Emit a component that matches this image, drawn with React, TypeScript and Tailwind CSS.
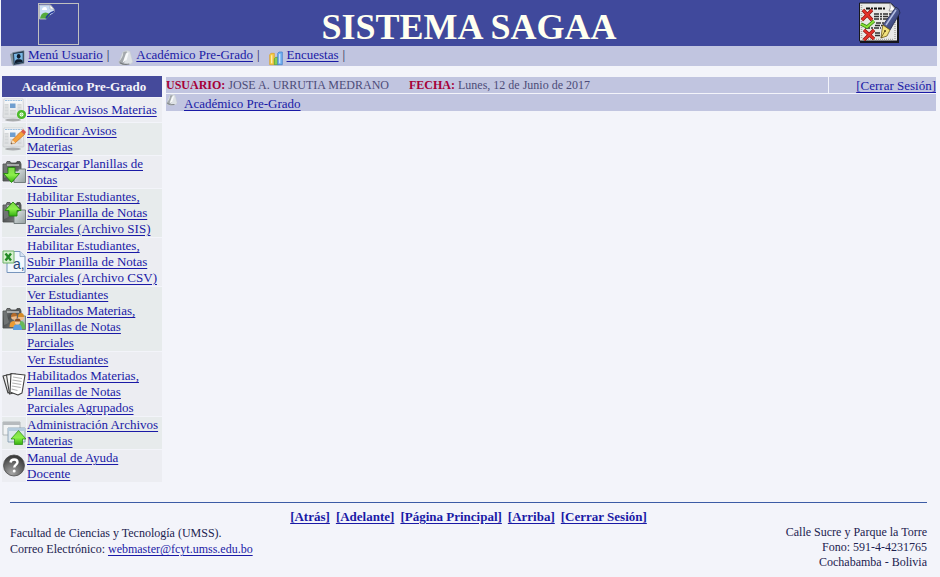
import type { ReactNode } from 'react';

const linkBase = 'text-[#1a1aa6] underline underline-offset-2';
const link = `text-[13px] ${linkBase}`;

function Icon({ children, className = 'size-6' }: { children: ReactNode; className?: string }) {
  return (
    <svg viewBox="0 0 24 24" className={`shrink-0 ${className}`} aria-hidden="true">
      {children}
    </svg>
  );
}

function Gradients() {
  return (
    <svg className="absolute size-0" aria-hidden="true">
      <defs>
        <linearGradient id="green" x1="0" y1="0" x2="0" y2="1">
          <stop offset="0" stopColor="#7fd64a" />
          <stop offset=".5" stopColor="#8cf04a" />
          <stop offset="1" stopColor="#35b010" />
        </linearGradient>
        <linearGradient id="dark" x1="0" y1="0" x2="1" y2="1">
          <stop offset="0" stopColor="#8e9191" />
          <stop offset=".4" stopColor="#4c4f4f" />
          <stop offset="1" stopColor="#8b8e8e" />
        </linearGradient>
        <linearGradient id="folder" x1="0" y1="0" x2="1" y2="1">
          <stop offset="0" stopColor="#e3e8e8" />
          <stop offset="1" stopColor="#94a0a0" />
        </linearGradient>
        <linearGradient id="paper" x1="0" y1="0" x2="0" y2="1">
          <stop offset="0" stopColor="#fafbfc" />
          <stop offset="1" stopColor="#dcdee0" />
        </linearGradient>
        <linearGradient id="pen" x1="0" y1="0" x2="1" y2="1">
          <stop offset="0" stopColor="#8d97c6" />
          <stop offset=".5" stopColor="#4a568f" />
          <stop offset="1" stopColor="#27305c" />
        </linearGradient>
        <radialGradient id="ball" cx=".4" cy=".85" r=".9">
          <stop offset="0" stopColor="#a6a6a6" />
          <stop offset=".5" stopColor="#6a6a6a" />
          <stop offset="1" stopColor="#2c2c2c" />
        </radialGradient>
      </defs>
    </svg>
  );
}

function Newspaper() {
  return (
    <>
      <ellipse cx="11" cy="22" rx="8" ry="1.400" fill="#a9abad" />
      <path d="M2 1h19l1 18q0 1-1 1H2q-1.500 0-1-2z" fill="url(#paper)" stroke="#c6c9cc" strokeWidth=".7" />
      <path d="M3 2.500h17" stroke="#9cbfe0" strokeWidth="1.200" strokeDasharray="2 .6" />
      <path d="M2.500 6h4v11h-4zM15.500 6h4v11h-4zM8 12h6v5H8z" fill="#d3d6d8" />
      <path d="M2.500 8h4M2.500 11h4M2.500 14h4M15.500 8h4M15.500 11h4M15.500 14h4M8 14h6" stroke="#eceeef" strokeWidth=".7" />
      <path d="M8 5.500h5.500V10H8z" fill="#6f9ecf" />
    </>
  );
}

function Binder() {
  return (
    <>
      <path d="M1 4h3l1-2.500h3L9 3h5l1-1.500h3L19 4v15l-2 2H1z" fill="url(#dark)" stroke="#474a4a" strokeWidth=".8" />
      <path d="M5 5h12" stroke="#c9cccc" strokeWidth="1.400" />
      <path d="M2 5v13q3 0 5-3L4 5z" fill="#707474" />
      <path d="M12 11h4l1-2h6.500v13.500H12z" fill="url(#folder)" stroke="#6b7575" strokeWidth=".9" />
    </>
  );
}

const arrowDown = <path d="M6 7.500h7v6h4.500L9.500 22.500 1.500 13.500H6z" fill="url(#green)" stroke="#238a0a" strokeWidth=".9" />;
const arrowUp = <path d="M11 1l8 8.500h-4V15H7V9.500H3z" fill="url(#green)" stroke="#238a0a" strokeWidth=".9" />;

function BellIcon({ className }: { className: string }) {
  return (
    <Icon className={className}>
      <path d="M7 3q6-4 11-1l4 15q0 4-6 5l-7 1q-6 0-8-4z" fill="#dde1e5" stroke="#c3c8ce" strokeWidth=".8" />
      <path d="M8 3q0 8-7 15 1 4 7 3l5-8q1-6 0-11z" fill="#a3a8ac" />
      <path d="M12 5l4-1-3 11-6 4z" fill="#f8fafb" />
      <path d="M3 19q6 4 14 2" fill="none" stroke="#75797d" strokeWidth="1.800" />
    </Icon>
  );
}

function UserIcon() {
  return (
    <Icon className="size-4">
      <path d="M0 6l5-2v17l-2 1z" fill="#8a979d" />
      <path d="M4 4l17-3v19L5 23z" fill="#22374c" stroke="#7d8e9b" />
      <path d="M6 6l13-2v14L7 20z" fill="#7ab8e6" />
      <ellipse cx="13" cy="9.500" rx="2.800" ry="3.500" fill="#101c2d" />
      <path d="M7 20q0-5 4-6h4q4 0 4 4z" fill="#101c2d" />
    </Icon>
  );
}

function ChartIcon() {
  return (
    <Icon className="size-4">
      <path d="M1 7l2-2h5v17H1z" fill="#f4cc43" stroke="#d99a26" />
      <path d="M8 13l2-2h4v11H8z" fill="#86cf52" stroke="#4f9c30" />
      <path d="M13 5l2-2h5v19h-7z" fill="#73b2f2" stroke="#3e78c5" />
      <path d="M4 8v12M16 6v14" stroke="#ffffff" strokeOpacity=".6" strokeWidth="2" />
    </Icon>
  );
}

function BrokenImage() {
  return (
    <svg viewBox="0 0 16 16" className="size-4" aria-hidden="true">
      <path d="M.5 1h11l3.500 4v10H.5z" fill="#c9dcf5" stroke="#b5b8bf" />
      <path d="M3 6q0-3 3-3 2 0 2 3z" fill="#ffffff" />
      <path d="M1 14.500q1-6 5.500-6t6 6z" fill="#55ab3d" />
      <path d="M11 1v4h4z" fill="#ffffff" stroke="#a4a7ad" strokeWidth=".6" />
      <path d="M7 16q3-5 9-8v8z" fill="#40499c" />
      <path d="M7 14.500q2-5 8-7" fill="none" stroke="#26399a" strokeWidth="1.500" />
    </svg>
  );
}

function ExamLogo() {
  return (
    <svg viewBox="0 0 42 42" className="h-[42px] w-[42px]" role="img" aria-label="SAGAA">
      <path d="M1 2h32l7 8v31H1z" fill="#15151c" />
      <path d="M.5 1h31l7 7v31H.5z" fill="#e9e9e6" stroke="#17171d" />
      <path d="M2.500 3v34M36 12v25M3 37.500h32" stroke="#a9a9a4" strokeWidth="1.500" strokeDasharray="1 1" />
      <path d="M7 6.500h20" stroke="#111111" strokeWidth="2" strokeDasharray="4 1 2 1 3 1" />
      <path d="M15 12h17M15 14.500h14M15 17h17M17 21h14M16 23.500h10M16 31h6M6 26h16M16 33.500h5" stroke="#303030" strokeWidth="1.300" strokeDasharray="5 1 2 1" />
      <path d="M31 1q1 6-1 8h8z" fill="#ffffff" stroke="#77777c" strokeWidth=".7" />
      <path d="M4 8l9 10M13 8L3 18M5 28l10 9M15 28L5 38" stroke="#8e120d" strokeWidth="3.400" />
      <path d="M4 8l9 10M13 8L3 18M5 28l10 9M15 28L5 38" stroke="#e4322a" strokeWidth="2.200" />
      <path d="M2 22l6 3 7-6" fill="none" stroke="#31850d" strokeWidth="3.400" />
      <path d="M2 22l6 3 7-6" fill="none" stroke="#8be039" strokeWidth="1.900" />
      <path d="M37 5q4 2 4 6L31 28l-7-5z" fill="url(#pen)" stroke="#20274c" strokeWidth=".8" />
      <path d="M37 8L27 23" stroke="#b7c1e3" strokeWidth="1.400" />
      <path d="M24 23l7 5-3 6-6 2 1-8z" fill="#f2e27b" stroke="#6e5a1c" strokeWidth=".8" />
      <path d="M22 36l4-7" stroke="#5b4711" strokeWidth=".8" />
      <circle cx="26" cy="29" r="1" fill="#4c3a0d" />
    </svg>
  );
}

const menu: { label: string; icon: ReactNode }[] = [
  {
    label: 'Publicar Avisos Materias',
    icon: (
      <>
        <Newspaper />
        <circle cx="19.500" cy="16.500" r="3.300" fill="#ffffff" stroke="#4dbb2c" strokeWidth="2.600" />
        <path d="M19.500 14.700v3.600M17.700 16.500h3.600" stroke="#b4e8a2" strokeWidth="1.200" />
      </>
    ),
  },
  {
    label: 'Modificar Avisos\nMaterias',
    icon: (
      <>
        <Newspaper />
        <path d="M9 17l1.500-4L19 4.500l3.500 3-9.500 8.500z" fill="#f5a13b" stroke="#c56a1c" strokeWidth=".7" />
        <path d="M19 4.500L21 2l3 3-1.500 2.500z" fill="#d9584c" />
        <path d="M9 17l1.500-4 3 3z" fill="#f4dfbf" />
        <path d="M9 17l1.500-.6-.9-1z" fill="#333333" />
      </>
    ),
  },
  { label: 'Descargar Planillas de\nNotas', icon: <><Binder />{arrowDown}</> },
  { label: 'Habilitar Estudiantes,\nSubir Planilla de Notas\nParciales (Archivo SIS)', icon: <><Binder />{arrowUp}</> },
  {
    label: 'Habilitar Estudiantes,\nSubir Planilla de Notas\nParciales (Archivo CSV)',
    icon: (
      <>
        <path d="M5 1.500h13l5 5v16H5z" fill="#f1f7fe" stroke="#7795bd" />
        <path d="M18 1.500v5h5" fill="#d6e3f3" stroke="#7795bd" strokeWidth=".7" />
        <path d="M1 1h11v12H1z" fill="#d6f0cf" stroke="#6fb368" />
        <path d="M3.500 3.500l5.500 7M9 3.500l-5.500 7" stroke="#238a25" strokeWidth="2.400" />
        <text x="11" y="19" fontSize="14" fill="#274878" fontFamily="Liberation Sans, sans-serif">a,</text>
      </>
    ),
  },
  {
    label: 'Ver Estudiantes\nHablitados Materias,\nPlanillas de Notas\nParciales',
    icon: (
      <>
        <Binder />
        <path d="M7.500 20q0-6 4-6t4 6z" fill="#eb9b34" />
        <path d="M15 22q0-8 4-8t4.500 8z" fill="#66b957" />
        <circle cx="12" cy="10" r="2.800" fill="#f1bd8b" />
        <path d="M9 10q0-4 3-4t3 3z" fill="#b56b29" />
        <circle cx="19" cy="10.500" r="2.800" fill="#f1bd8b" />
        <path d="M16 10q0-4 3-4t3 4z" fill="#d58b26" />
        <path d="M11 23q0-6 4.500-6t4.500 6z" fill="#5c9fe0" />
        <circle cx="15.500" cy="15" r="2.600" fill="#f5ca9c" />
        <path d="M12.700 14.500q0-3 3-3t3 3z" fill="#8c4f22" />
      </>
    ),
  },
  {
    label: 'Ver Estudiantes\nHabilitados Materias,\nPlanillas de Notas\nParciales Agrupados',
    icon: (
      <g strokeLinejoin="round">
        <path d="M1 4l8-2 3 16-6 3z" fill="#eeeeee" stroke="#404040" strokeWidth="1.100" />
        <path d="M4.500 3l9-1 1 18-7 2z" fill="#f8f8f8" stroke="#404040" strokeWidth="1.100" />
        <path d="M9 1.500L23 3l-3 18-4 2-8-3z" fill="#ffffff" stroke="#404040" strokeWidth="1.100" />
        <path d="M11 5l9 1.500M10.500 8l9 1.500M10.200 11l9 1.500M9.800 14l9 1.500M9.500 17l6 1.500" stroke="#b4b4b4" strokeWidth="1.200" />
      </g>
    ),
  },
  {
    label: 'Administración Archivos\nMaterias',
    icon: (
      <>
        <path d="M1 1h17v13H1z" fill="#f1f3f4" stroke="#a5a9ad" strokeWidth=".8" />
        <path d="M1 1h17v3H1z" fill="#b6babd" />
        <path d="M6 7h17v14H6z" fill="#dce7ee" stroke="#7f98ac" strokeWidth=".8" />
        <path d="M6 7h17v3H6z" fill="#b5cbdc" />
        <path d="M16.500 9.500L24 18h-3.500v5.500h-8V18H9z" fill="url(#green)" stroke="#238a0a" strokeWidth=".7" />
      </>
    ),
  },
  {
    label: 'Manual de Ayuda\nDocente',
    icon: (
      <>
        <circle cx="12" cy="11.500" r="10.500" fill="url(#ball)" stroke="#4a4a4a" strokeWidth=".8" />
        <path d="M8.500 8.500q.4-3 3.700-3t3.300 2.800c0 2.200-3.200 2.500-3.200 5.200" fill="none" stroke="#ffffff" strokeWidth="2.400" />
        <circle cx="12.200" cy="17" r="1.500" fill="#ffffff" />
      </>
    ),
  },
];

const topMenu = [
  { label: 'Menú Usuario', icon: <UserIcon /> },
  { label: 'Académico Pre-Grado', icon: <BellIcon className="size-4" /> },
  { label: 'Encuestas', icon: <ChartIcon /> },
];

const footerLinks = ['[Atrás]', '[Adelante]', '[Página Principal]', '[Arriba]', '[Cerrar Sesión]'];

export default function App() {
  return (
    <div className="min-h-screen bg-[#f3f4fa] pr-[3px] pl-px font-['Liberation_Serif',serif] text-[12px] leading-4 text-[#22224f]">
      <Gradients />
      <header>
        <div className="flex h-[46px] items-center bg-[#40499c]">
          <div className="flex w-[115px] shrink-0 justify-center pt-0.5">
            <div className="h-[42px] w-[41px] border border-[#c0c0c0]">
              <BrokenImage />
            </div>
          </div>
          <h1 className="flex-1 pt-2 text-center text-4xl font-bold text-[#fffff0]">SISTEMA SAGAA</h1>
          <div className="flex w-[115px] shrink-0 justify-center">
            <ExamLogo />
          </div>
        </div>
        <nav className="flex h-5 gap-[9px] bg-[#c1c5e0] pl-[9px]">
          {topMenu.map((item) => (
            <div key={item.label} className="flex gap-0.5">
              <span className="pt-1">{item.icon}</span>
              <span className="flex gap-1 pt-px text-[13px]">
                <a href="#" className={link}>{item.label}</a>
                <span>|</span>
              </span>
            </div>
          ))}
        </nav>
      </header>

      <div className="flex items-start gap-1 pt-2.5 pr-px pl-px">
        <aside className="w-40 shrink-0">
          <h2 className="bg-[#454a9b] pt-[3px] pb-0.5 pl-1 text-center text-[13px] font-bold text-[#f4f4fa]">Académico Pre-Grado</h2>
          <ul className="flex flex-col gap-px pt-px">
            {menu.map((item, i) => (
              <li key={item.label} className={`flex min-h-6 items-stretch gap-px ${i % 2 ? '*:bg-[#e7ebec]' : '*:bg-[#ecedf2]'}`}>
                <span className="flex w-6 shrink-0 items-center">
                  <Icon className="h-6 w-6">{item.icon}</Icon>
                </span>
                <span className="flex flex-1 items-center">
                  <a href="#" className={`${link} whitespace-pre`}>{item.label}</a>
                </span>
              </li>
            ))}
          </ul>
        </aside>

        <main className="flex flex-1 flex-col gap-px pt-px">
          <div className="flex h-4 gap-px text-[#4c4c78]">
            <div className="flex flex-1 gap-5 bg-[#c1c5e0]">
              <span><b className="text-[#a60037]">USUARIO:</b> JOSE A. URRUTIA MEDRANO</span>
              <span><b className="text-[#a60037]">FECHA:</b> Lunes, 12 de Junio de 2017</span>
            </div>
            <div className="w-[107px] bg-[#c1c5e0] pt-px text-right">
              <a href="#" className={link}>[Cerrar Sesión]</a>
            </div>
          </div>
          <div className="flex h-[17px] gap-1.5 bg-[#c1c5e0]">
            <BellIcon className="size-3" />
            <a href="#" className={`${link} pt-0.5`}>Académico Pre-Grado</a>
          </div>
        </main>
      </div>

      <footer className="pt-5 pr-2.5 pl-[9px]">
        <hr className="h-px border-0 bg-[#3b5ba5]" />
        <nav className="flex justify-center gap-1.5 pt-1.5 font-bold">
          {footerLinks.map((label) => (
            <a key={label} href="#" className={link}>{label}</a>
          ))}
        </nav>
        <div className="flex justify-between">
          <address className="not-italic">
            Facultad de Ciencias y Tecnología (UMSS).<br />
            Correo Electrónico: <a href="mailto:webmaster@fcyt.umss.edu.bo" className={linkBase}>webmaster@fcyt.umss.edu.bo</a>
          </address>
          <address className="text-right leading-[15px] not-italic">
            Calle Sucre y Parque la Torre<br />
            Fono: 591-4-4231765<br />
            Cochabamba - Bolivia
          </address>
        </div>
      </footer>
    </div>
  );
}
